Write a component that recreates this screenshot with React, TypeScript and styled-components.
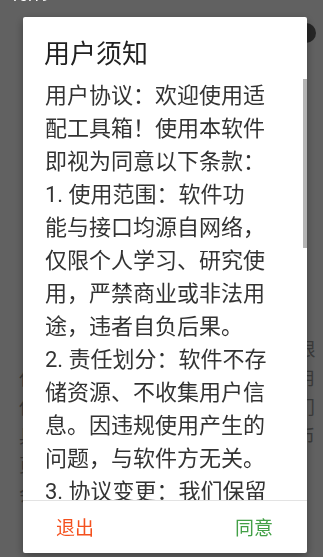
import * as React from 'react';
import styled, { createGlobalStyle } from 'styled-components';

const GlobalStyle = createGlobalStyle`
  html, body {
    margin: 0;
    padding: 0;
    width: 323px;
    height: 557px;
    overflow: hidden;
    background: #ffffff;
  }
  * {
    box-sizing: border-box;
  }
`;

const cjk = `Roboto, "Noto Sans CJK SC", "Noto Sans", sans-serif`;

const Page = styled.div`
  position: relative;
  width: 323px;
  height: 557px;
  padding-top: 336px;
  font-family: ${cjk};
  background: #ffffff;
  overflow: hidden;
`;

const Fab = styled.div`
  position: absolute;
  top: 23px;
  left: 296px;
  width: 20px;
  height: 20px;
  border-radius: 50%;
  background: #646464;
`;

const PageLine = styled.div<{ $indent?: boolean }>`
  padding-left: ${(p) => (p.$indent ? '38px' : '19px')};
  font-size: 18.5px;
  line-height: 29px;
  color: #9a9a9a;
  white-space: nowrap;
`;

const Overlay = styled.div`
  position: fixed;
  inset: 0;
  display: flex;
  align-items: flex-start;
  padding: 17px 0 0 23px;
  background: rgba(0, 0, 0, 0.62);
`;

const StatusBar = styled.div`
  position: fixed;
  top: 0;
  left: 10px;
  height: 3px;
  overflow: hidden;
  display: flex;
  align-items: flex-end;
`;

const Clock = styled.span`
  font-family: Roboto, sans-serif;
  font-size: 16px;
  line-height: 1;
  color: #ffffff;
  margin-bottom: -1px;
`;

const Dialog = styled.div`
  width: 284px;
  height: 536px;
  display: flex;
  flex-direction: column;
  background: #ffffff;
  border-radius: 2px;
  box-shadow: 0 3px 10px rgba(0, 0, 0, 0.35);
  overflow: hidden;
`;

const Title = styled.h2`
  margin: 0;
  padding: 20px 0 0 21px;
  font-family: ${cjk};
  font-size: 26px;
  font-weight: 400;
  line-height: 34px;
  color: #212121;
`;

const BodyFrame = styled.div`
  position: relative;
  flex: 1;
  min-height: 0;
  margin-top: 8px;
`;

const Body = styled.div`
  height: 100%;
  padding: 0 0 59px 22px;
  overflow-y: auto;
  scrollbar-width: none;
  &::-webkit-scrollbar {
    display: none;
  }
`;

const Thumb = styled.div`
  position: absolute;
  top: 0;
  right: 0;
  width: 4px;
  height: 169px;
  background: #b4b4b4;
`;

const Line = styled.div`
  font-family: ${cjk};
  font-size: 22px;
  line-height: 33px;
  color: #333333;
  white-space: nowrap;
`;

const Footer = styled.div`
  flex: none;
  height: 53px;
  display: flex;
  align-items: center;
  justify-content: space-between;
  padding: 3px 34px 0 33px;
  border-top: 1px solid #e3e3e3;
`;

const Action = styled.button<{ $tone: string }>`
  padding: 0;
  border: 0;
  background: none;
  font-family: ${cjk};
  font-size: 19px;
  line-height: 24px;
  color: ${(p) => p.$tone};
  cursor: pointer;
`;

const agreement = [
  '用户协议：欢迎使用适',
  '配工具箱！使用本软件',
  '即视为同意以下条款：',
  '1. 使用范围：软件功',
  '能与接口均源自网络，',
  '仅限个人学习、研究使',
  '用，严禁商业或非法用',
  '途，违者自负后果。',
  '2. 责任划分：软件不存',
  '储资源、不收集用户信',
  '息。因违规使用产生的',
  '问题，与软件方无关。',
  '3. 协议变更：我们保留',
  '随时修改本协议的权利，',
  '修改后的协议将在软件',
  '内公布，继续使用即视',
  '为接受修改后的协议。',
  '4. 知识产权：软件内展',
  '示的内容版权归原作者',
  '所有，如有侵权请联系',
  '我们删除。',
  '5. 免责声明：因网络状',
  '况、通讯线路等不可抗',
  '力导致的服务中断，软',
  '件方不承担任何责任。',
  '6. 其他：本协议的解释',
  '权归软件方所有。请仔',
  '细阅读以上条款，点击',
  '“同意”即表示您已阅',
  '读并同意全部内容。',
];

const background = [
  '工具箱收录的接口均来自网络资限',
  '仅供学习交流使用请勿用于商业途用',
  '使用前请阅读相关说明了解各功能门',
  '具体用法如遇问题可在设置中查看币',
  '页面或通过反馈渠道联系开发者们、',
  '会尽快处理您的问题与建议。',
];

export default function App() {
  return (
    <>
      <GlobalStyle />
      <Page>
        <Fab />
        {background.map((t, i) => (
          <PageLine key={i} $indent={i === 0}>
            {t}
          </PageLine>
        ))}
      </Page>
      <Overlay>
        <Dialog>
          <Title>用户须知</Title>
          <BodyFrame>
            <Body>
              {agreement.map((t, i) => (
                <Line key={i}>{t}</Line>
              ))}
            </Body>
            <Thumb />
          </BodyFrame>
          <Footer>
            <Action $tone="#f4511e">退出</Action>
            <Action $tone="#43a047">同意</Action>
          </Footer>
        </Dialog>
      </Overlay>
      <StatusBar>
        <Clock>10:19</Clock>
      </StatusBar>
    </>
  );
}
